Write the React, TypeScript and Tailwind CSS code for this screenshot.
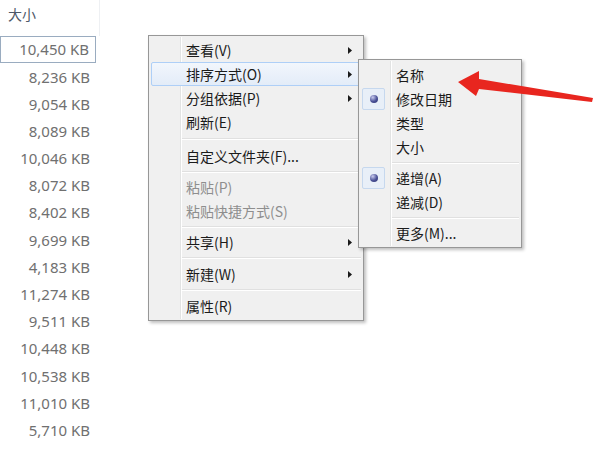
import type React from "react";

const SIZES = [
  "10,450 KB",
  "8,236 KB",
  "9,054 KB",
  "8,089 KB",
  "10,046 KB",
  "8,072 KB",
  "8,402 KB",
  "9,699 KB",
  "4,183 KB",
  "11,274 KB",
  "9,511 KB",
  "10,448 KB",
  "10,538 KB",
  "11,010 KB",
  "5,710 KB",
  "8,110 KB",
];

type Entry =
  | { kind: "item"; label: string; sub?: boolean; disabled?: boolean; hot?: boolean; radio?: boolean }
  | { kind: "sep"; h: string };

const MAIN: Entry[] = [
  { kind: "item", label: "查看(V)", sub: true },
  { kind: "item", label: "排序方式(O)", sub: true, hot: true },
  { kind: "item", label: "分组依据(P)", sub: true },
  { kind: "item", label: "刷新(E)" },
  { kind: "sep", h: "h-[10px]" },
  { kind: "item", label: "自定义文件夹(F)..." },
  { kind: "sep", h: "h-[7px]" },
  { kind: "item", label: "粘贴(P)", disabled: true },
  { kind: "item", label: "粘贴快捷方式(S)", disabled: true },
  { kind: "sep", h: "h-[7px]" },
  { kind: "item", label: "共享(H)", sub: true },
  { kind: "sep", h: "h-[8px]" },
  { kind: "item", label: "新建(W)", sub: true },
  { kind: "sep", h: "h-[8px]" },
  { kind: "item", label: "属性(R)" },
];

const SORT: Entry[] = [
  { kind: "item", label: "名称" },
  { kind: "item", label: "修改日期", radio: true },
  { kind: "item", label: "类型" },
  { kind: "item", label: "大小" },
  { kind: "sep", h: "h-[7px]" },
  { kind: "item", label: "递增(A)", radio: true },
  { kind: "item", label: "递减(D)" },
  { kind: "sep", h: "h-[7px]" },
  { kind: "item", label: "更多(M)..." },
];

function SubArrow() {
  return (
    <svg className="h-[7px] w-[4px]" viewBox="0 0 4 7">
      <path d="M0 0 L4 3.5 L0 7 Z" fill="#1a1a1a" />
    </svg>
  );
}

function MenuList({ entries }: { entries: Entry[] }) {
  return (
    <div className="relative flex flex-col">
      {entries.map((e, i) => {
        if (e.kind === "sep") {
          return (
            <div className={`flex items-center pl-[31px] ${e.h}`} key={i}>
              <div className="w-full border-[#e0e0e0] border-t border-b-white border-b" />
            </div>
          );
        }
        return (
          <div
            className={`relative flex h-[24px] items-center pr-[8px] pl-[34px] ${
              e.hot
                ? "rounded-[2px] border border-[#aecff7] bg-gradient-to-b from-[#f2f6fc] to-[#e3ecf8]"
                : "border border-transparent"
            }`}
            key={i}
          >
            {e.radio && (
              <div className="absolute top-[0px] left-[0px] flex h-[22px] w-[23px] items-center justify-center rounded-[2px] border border-[#c6d8ee] bg-[#e8eff8]">
                <div className="h-[8px] w-[8px] rounded-full bg-[radial-gradient(circle_at_35%_30%,#c8cbef,#4a5196_55%,#2c3170)]" />
              </div>
            )}
            <span
              className={`flex-1 text-[14px] leading-none ${
                e.disabled ? "text-[#8e8e8e]" : "text-[#1b1b1b]"
              }`}
            >
              {e.label}
            </span>
            {e.sub && <SubArrow />}
          </div>
        );
      })}
    </div>
  );
}

function Gutter() {
  return (
    <div className="absolute top-[1px] bottom-[1px] left-[31px] flex">
      <div className="w-px bg-[#e2e3e3]" />
      <div className="w-px bg-white" />
    </div>
  );
}

export default function App() {
  const font: React.CSSProperties = {};
  return (
    <div
      className="relative h-[450px] w-[600px] overflow-hidden bg-white"
      style={font}
    >
      <div className="flex w-[100px] flex-col font-['Noto_Sans','Noto_Sans_CJK_SC',sans-serif]">
        <div className="flex h-[36px] items-start border-[#eef0f3] border-r pt-[4px] pl-[8px] text-[14px] text-[#4d5868]">
          <span className="font-['Noto_Sans_CJK_SC',sans-serif]">大小</span>
        </div>
        {SIZES.map((s, i) => (
          <div
            className={`flex h-[27.2px] w-[96px] items-center justify-end pr-[6px] text-[15px] text-[#707070] ${
              i === 0 ? "border border-[#9aacc0]" : ""
            }`}
            key={s + i}
          >
            {s}
          </div>
        ))}
      </div>

      {/* main context menu */}
      <div className="absolute top-[35px] left-[148px] w-[216px] border border-[#979797] bg-[#f0f0f0] p-[2px] font-['Noto_Sans_CJK_SC',sans-serif] shadow-[2px_2px_3px_rgba(0,0,0,0.25)]">
        <Gutter />
        <MenuList entries={MAIN} />
      </div>

      {/* sort submenu */}
      <div className="absolute top-[59px] left-[358px] w-[164px] border border-[#979797] bg-[#f0f0f0] px-[2px] pt-[3px] pb-[2px] font-['Noto_Sans_CJK_SC',sans-serif] shadow-[2px_2px_3px_rgba(0,0,0,0.25)]">
        <Gutter />
        <MenuList entries={SORT} />
      </div>

      {/* red annotation arrow */}
      <svg
        className="absolute top-[65px] left-[450px] h-[45px] w-[150px]"
        viewBox="0 0 150 45"
      >
        <polygon
          fill="#e8261f"
          points="8,17 29,6 29,14 143,33 142,37 29,24 26,31"
        />
      </svg>
    </div>
  );
}
